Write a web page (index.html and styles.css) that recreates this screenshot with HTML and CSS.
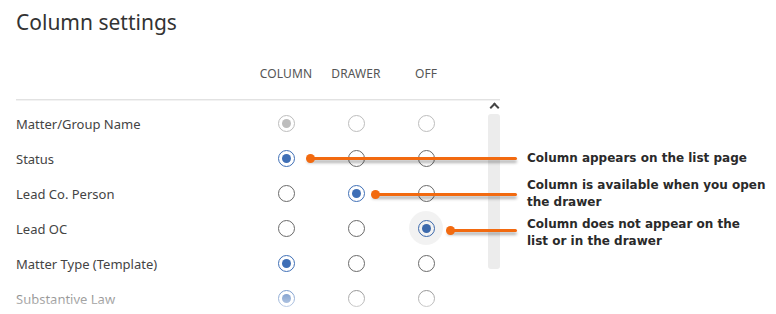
FILE: index.html
```html
<!DOCTYPE html>
<html lang="en">
<head>
  <meta charset="UTF-8" />
  <title>Column settings</title>
  <link rel="stylesheet" href="styles.css">
</head>
<body>
  <div class="panel">
    <h1>Column settings</h1>

    <div class="head">
      <span class="label"></span>
      <span class="col">COLUMN</span>
      <span class="col">DRAWER</span>
      <span class="col">OFF</span>
    </div>

    <div class="list-wrap">
      <div class="list">
        <div class="row disabled">
          <span class="label">Matter/Group Name</span>
          <span class="col"><span class="radio on"></span></span>
          <span class="col"><span class="radio"></span></span>
          <span class="col"><span class="radio"></span></span>
        </div>
        <div class="row">
          <span class="label">Status</span>
          <span class="col"><span class="radio on"></span></span>
          <span class="col"><span class="radio"></span></span>
          <span class="col"><span class="radio"></span></span>
        </div>
        <div class="row">
          <span class="label">Lead Co. Person</span>
          <span class="col"><span class="radio"></span></span>
          <span class="col"><span class="radio on"></span></span>
          <span class="col"><span class="radio"></span></span>
        </div>
        <div class="row">
          <span class="label">Lead OC</span>
          <span class="col"><span class="radio"></span></span>
          <span class="col"><span class="radio"></span></span>
          <span class="col"><span class="radio on focus"></span></span>
        </div>
        <div class="row">
          <span class="label">Matter Type (Template)</span>
          <span class="col"><span class="radio on"></span></span>
          <span class="col"><span class="radio"></span></span>
          <span class="col"><span class="radio"></span></span>
        </div>
        <div class="row">
          <span class="label">Substantive Law</span>
          <span class="col"><span class="radio on"></span></span>
          <span class="col"><span class="radio"></span></span>
          <span class="col"><span class="radio"></span></span>
        </div>
      </div>
      <div class="scroll">
        <span class="caret"></span>
        <span class="track"></span>
      </div>
    </div>
  </div>

  <div class="note note-1">
    <span class="line"></span>
    <p>Column appears on the list page</p>
  </div>
  <div class="note note-2">
    <span class="line"></span>
    <p>Column is available when you open<br>the drawer</p>
  </div>
  <div class="note note-3">
    <span class="line"></span>
    <p>Column does not appear on the<br>list or in the drawer</p>
  </div>
</body>
</html>
```

FILE: styles.css
```css
body {
  margin: 0;
  background: #fff;
  font-family: "Noto Sans", "Open Sans", sans-serif;
  color: #333;
  position: relative;
  height: 314px;
  overflow: hidden;
}

.panel {
  padding: 8px 0 0 16px;
  width: 484px;
}

h1 {
  margin: 0;
  font-size: 21px;
  font-weight: 400;
  color: #333;
  line-height: 28px;
}

.head {
  display: flex;
  align-items: center;
  height: 63px;
  border-bottom: 1px solid #e2e2e2;
  box-shadow: 0 1px 0 #f2f2f2;
}

.head .col {
  font-size: 12px;
  color: #555;
  letter-spacing: 0.1px;
  padding-top: 12px;
}

.label {
  width: 235px;
  flex: none;
}

.col {
  width: 70px;
  flex: none;
  display: flex;
  justify-content: center;
}

.list-wrap {
  display: flex;
}

.list {
  padding-top: 6px;
  width: 472px;
  position: relative;
}

.list::after {
  content: "";
  position: absolute;
  left: 0;
  right: 0;
  bottom: 0;
  height: 30px;
  background: linear-gradient(rgba(255,255,255,0.2), rgba(255,255,255,0.85));
}

.row {
  display: flex;
  align-items: center;
  height: 35px;
  font-size: 13px;
  color: #444;
}

.radio {
  box-sizing: border-box;
  width: 17px;
  height: 17px;
  border: 1.5px solid #6a6a6a;
  border-radius: 50%;
  display: flex;
  align-items: center;
  justify-content: center;
  position: relative;
}

.radio.on {
  border-color: #3f6fb6;
}

.radio.on::before {
  content: "";
  width: 9px;
  height: 9px;
  border-radius: 50%;
  background: #3f6fb6;
}

.radio.focus::after {
  content: "";
  position: absolute;
  width: 34px;
  height: 34px;
  left: -10px;
  top: -10px;
  border-radius: 50%;
  background: rgba(0, 0, 0, 0.05);
}

.row.disabled .radio {
  border-color: #bdbdbd;
}

.row.disabled .radio.on::before {
  background: #bdbdbd;
}

.scroll {
  width: 12px;
  display: flex;
  flex-direction: column;
  align-items: center;
}

.caret {
  width: 5px;
  height: 5px;
  border-left: 2px solid #444;
  border-top: 2px solid #444;
  transform: rotate(45deg);
  margin-top: 4px;
}

.track {
  width: 12px;
  height: 155px;
  margin-top: 3px;
  background: #ececec;
  border-radius: 3px;
}

.note {
  position: absolute;
  display: flex;
  align-items: center;
}

.note .line {
  height: 3px;
  background: #f26a10;
  border-radius: 2px;
  position: relative;
  box-shadow: 0 3px 3px rgba(0, 0, 0, 0.3);
  margin-right: 10px;
}

.note .line::before {
  content: "";
  position: absolute;
  left: -1px;
  top: -3px;
  width: 9px;
  height: 9px;
  border-radius: 50%;
  background: #f26a10;
}

.note p {
  margin: 0;
  font-family: "DejaVu Sans", Verdana, sans-serif;
  font-weight: bold;
  font-size: 12px;
  line-height: 17px;
  color: #2a2a2a;
}

.note-1 {
  left: 307px;
  top: 150px;
}

.note-1 .line {
  width: 210px;
}

.note-2 {
  left: 372px;
  top: 177px;
}

.note-2 .line {
  width: 145px;
}

.note-3 {
  left: 447px;
  top: 216px;
}

.note-3 .line {
  width: 70px;
  margin-top: -6px;
}
```
